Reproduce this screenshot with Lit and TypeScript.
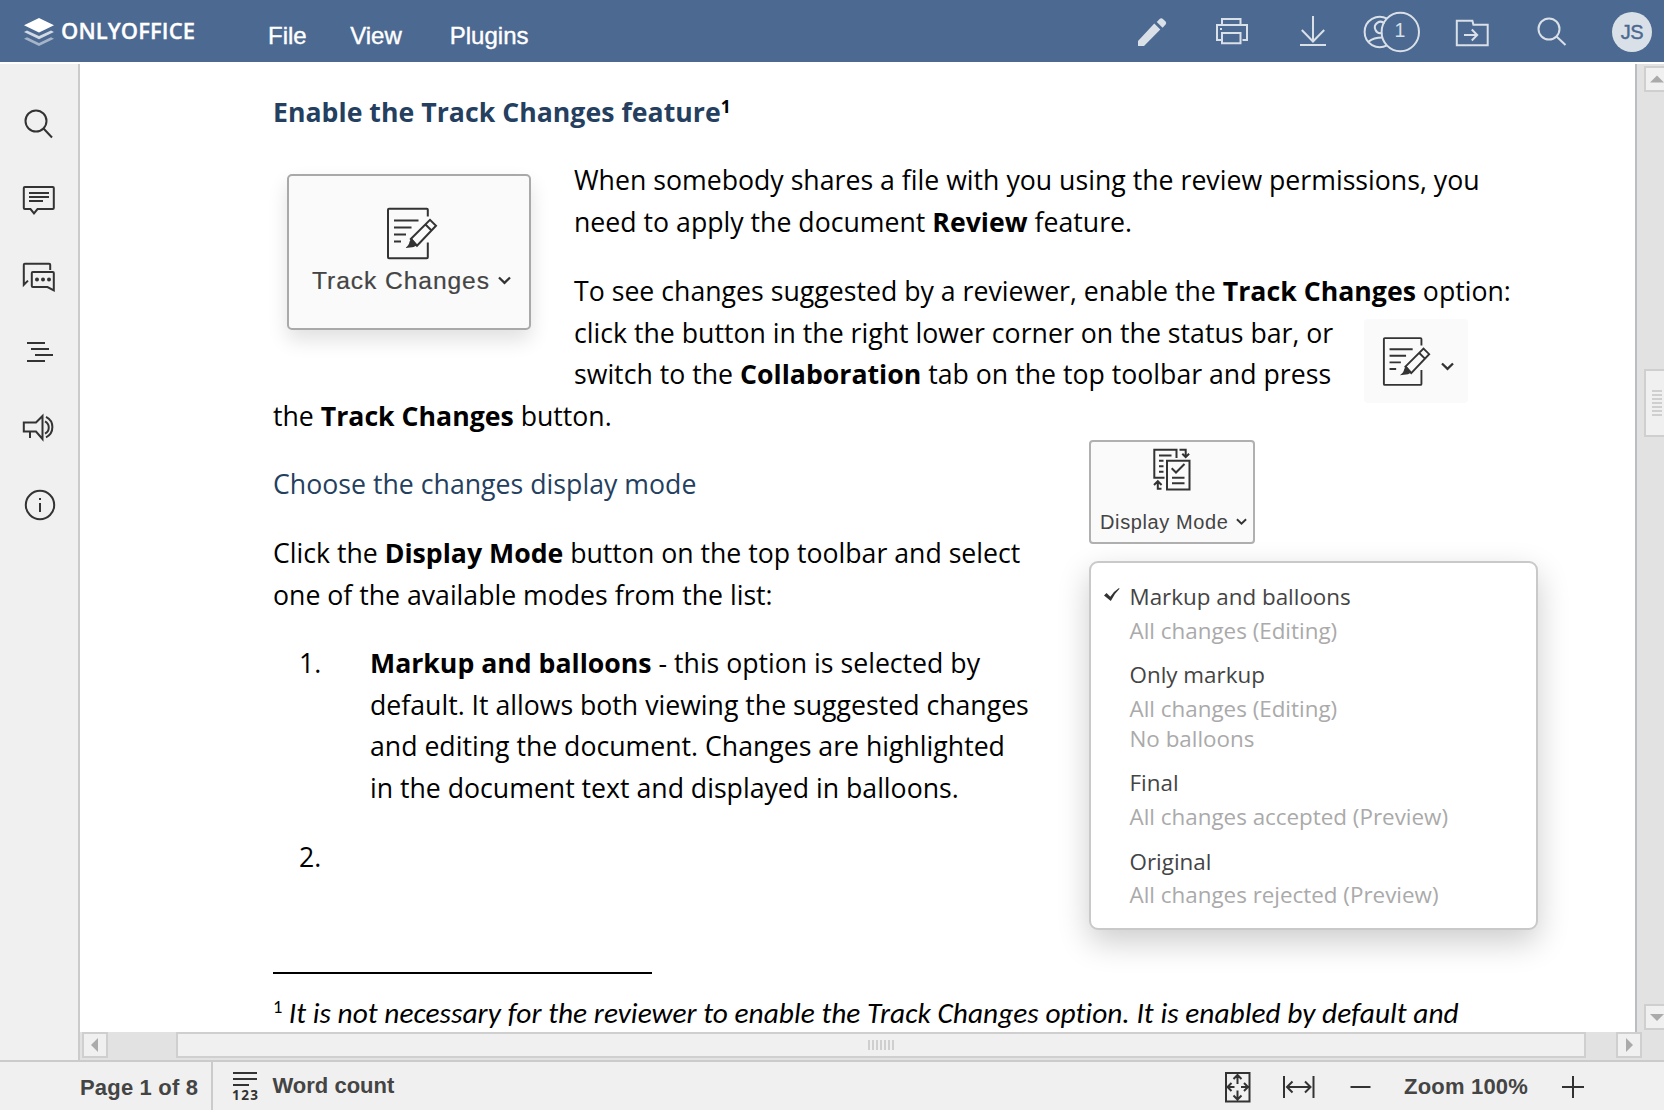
import { LitElement, html, svg, css } from 'lit';
import { customElement } from 'lit/decorators.js';

/* Toolbar glyphs: each occupies an 80x62 cell of the header. */
const headerIcons = [
  svg`<path class="solid" d="M26 46v-5l16.3-17.5 6 6L32 46zM44.8 22l2.8-3q1.6-1.6 3.3 0l2.7 2.6q1.3 1.6 0 3l-3 3.1z"/>`,
  svg`<path d="M110 24.5V19h18.5v5.5M109.500 40h-4.500V25h30v15h-4.500M110 33h18.500v10.200H110z"/><path class="solid" d="M108 28h2v2h-2z"/>`,
  svg`<path d="M201 16v25.500M189.800 30l11.200 11.500L212.200 30M188 45h26"/>`,
  svg`<path d="M275 18.600a15.200 15.200 0 1 0 0 26.800M256.500 41.700q5-4.200 14-4.200M272.500 23.500a5.600 5.600 0 1 0-2.300 9.300"/><ellipse cx="288.300" cy="32" rx="18.700" ry="19.200"/>`,
  svg`<path d="M344.800 45.200V20.800h15.600l1 4h14.300v20.400zM352 35h13M359.800 29.500l5.400 5.500-5.400 5.500"/>`,
  svg`<circle cx="437" cy="29" r="10.500"/><path d="M444.500 36.500l9 8.500"/>`,
];

/* Side panel glyphs, 40x40 each. */
const sideIcons = [
  svg`<circle cx="17" cy="17" r="10.500"/><path d="M24.500 24.500l8.500 9"/>`,
  svg`<path d="M5.800 7h28q1 0 1 1v20q0 1-1 1H18.500L15 33.300 11.500 29H5.800q-1 0-1-1V8q0-1 1-1zM10 13h20M10 17h20M10 21h14"/>`,
  svg`<path d="M31.200 14V8.800q0-1-1-1H5.800q-1 0-1 1v20L9 24.600M13.800 16h20q1 0 1 1v17.300L28.500 31H13.800q-1 0-1-1V17q0-1 1-1z"/><circle class="solid" cx="18" cy="23.500" r="2"/><circle class="solid" cx="24" cy="23.500" r="2"/><circle class="solid" cx="30" cy="23.500" r="2"/>`,
  svg`<path d="M8 11h18M12 17h18M16 23h18M8 29h18"/>`,
  svg`<path d="M4.800 14.500H17L23.500 8v23L17 23.500H4.800zM11 23.500V30M26 13.300a7 7 0 0 1 0 12.400M27 8.800a11.500 11.500 0 0 1 0 20.600"/>`,
  svg`<circle cx="21" cy="21" r="14.200"/><path d="M21 19v9"/><path class="solid" d="M20 14h2v2h-2z"/>`,
];

const reviewIcon = (cls: string) => html`<svg class=${cls} viewBox="0 0 53 54">
  <path d="M41.800 10.500V3.800q0-1-1-1H3q-1 0-1 1v47.500q0 1 1 1h37.800q1 0 1-1V36.500M8 14.500h24.500M8 21.500h17.500M8 28.500h12M8 35.500h7"/>
  <path d="M24.800 33L44 13.800l6 6-19 20zM39.500 18.500l6 6"/>
  <path class="solid" d="M19 42q4-2.500 4.600-6.500l2-3.500 6 7-4 2z"/></svg>`;

const chevron = (cls: string) => html`<svg class=${cls} viewBox="0 0 13 9"><path d="M1 1.500l5.500 5.300L12 1.500"/></svg>`;

interface Mode { title: string; notes: string[]; checked?: boolean; }
const modes: Mode[] = [
  { title: 'Markup and balloons', notes: ['All changes (Editing)'], checked: true },
  { title: 'Only markup', notes: ['All changes (Editing)', 'No balloons'] },
  { title: 'Final', notes: ['All changes accepted (Preview)'] },
  { title: 'Original', notes: ['All changes rejected (Preview)'] },
];

@customElement('app-root')
export class AppRoot extends LitElement {
  static styles = css`
    :host { display: flex; flex-direction: column; width: 1664px; height: 1110px; overflow: hidden; background: #fff; font-family: "Liberation Sans", Arial, sans-serif; }
    * { box-sizing: border-box; }
    svg { display: block; flex: none; fill: none; stroke: #333; stroke-width: 2; }
    svg .solid { fill: #333; stroke: none; }
    p { margin: 0; white-space: nowrap; }

    .header { display: flex; flex: none; height: 62px; background: #4c6991; color: #fff; }
    .brand { display: flex; width: 268px; padding-left: 24px; }
    .brand svg { width: 30px; height: 62px; stroke: none; fill: #fff; }
    .brand span { margin-left: 7px; font: 600 22px/61px "Open Sans", sans-serif; letter-spacing: .080px; -webkit-text-stroke: .3px #fff; }
    .menu { display: flex; font-size: 24px; line-height: 72px; -webkit-text-stroke: .4px #fff; }
    .menu span { margin-right: 43.500px; }
    .menu span + span { margin-right: 48px; }
    .tools { display: flex; margin-left: auto; padding-right: 12px; align-items: center; }
    .tools svg { width: 500px; height: 62px; stroke: #d9e0e8; }
    .tools svg .solid { fill: #d9e0e8; }
    .tools text { fill: #d9e0e8; stroke: none; font-size: 19.500px; }
    .avatar { width: 40px; height: 40px; margin-top: 2px; border-radius: 50%; background: #d9e0e8; color: #4c6991; font-size: 20px; line-height: 40px; letter-spacing: -.5px; text-align: center; -webkit-text-stroke: .4px #4c6991; }

    .main { display: flex; flex: 1; min-height: 0; margin-top: 2px; }
    .side { display: flex; flex-direction: column; flex: none; gap: 36px; width: 80px; padding: 40px 0 0 19px; background: #f0f0f0; border-right: 2px solid #cbcbcb; }
    .side svg { width: 40px; height: 40px; }
    .center { display: flex; flex: none; flex-direction: column; width: 1564px; background: #e2e2e2; }
    .page { width: 1557px; height: 968px; flex: none; overflow: hidden; padding: 27px 0 0 193px; background: #fff; border-right: 2px solid #b8bec2; color: #000; font: 26.670px/41.770px "Open Sans", sans-serif; }
    .heading { color: #243f60; font-weight: 700; letter-spacing: .020px; }
    .sup { display: inline-block; color: #000; font-size: 17.500px; line-height: 20px; transform: translateY(-9px); }
    .sub { color: #243f60; letter-spacing: .020px; }
    .gap { margin-top: 26.900px; }
    .share { display: flex; margin-top: 26.670px; letter-spacing: .010px; }
    .side-card { flex: none; width: 301px; padding: 14.500px 0 0 14px; }
    .track { display: flex; flex-direction: column; width: 244px; height: 156px; padding: 30px 0 0 23px; background: #fafafa; border: 2px solid #a9a9a9; border-radius: 5px; box-shadow: 0 10px 20px rgba(0,0,0,.12); }
    .review { width: 53px; height: 54px; margin-left: 74px; }
    .caption { display: flex; align-items: center; color: #444; white-space: nowrap; }
    .track .caption { margin-top: 5px; font: 24.600px/32px "Liberation Sans", Arial, sans-serif; letter-spacing: .930px; -webkit-text-stroke: .2px #444; }
    .chev { width: 13px; height: 9px; margin-left: 8.500px; stroke-width: 2.300; }
    .inline { display: flex; height: 83.340px; }
    .inline-icon { display: flex; align-items: center; width: 104px; height: 84px; margin: 7px 0 0 31px; padding-left: 18px; background: #fafafa; border-radius: 4px; }
    .review-small { width: 50px; height: 52px; margin-bottom: 0; }
    .inline-icon .chev { margin: 11px 0 0 9px; }

    .choose { display: flex; height: 493px; }
    .left { flex: none; width: 816px; padding-top: 26.400px; }
    .item { display: flex; margin-top: 26.670px; padding-left: 26px; }
    .num { flex: none; width: 71px; }
    .right { flex: none; padding-top: 3px; }
    .display { display: flex; flex-direction: column; width: 165.500px; height: 104px; padding: 6px 0 0 9px; background: #fafafa; border: 2px solid #b0b0b0; border-radius: 4px; }
    .display .mode-icon { width: 40px; height: 44px; margin-left: 51px; }
    .display .caption { margin-top: 18px; font: 20px/24px "Liberation Sans", Arial, sans-serif; letter-spacing: .620px; }
    .chev-small { width: 11px; height: 7.500px; margin-left: 7px; stroke-width: 2.300; }
    .list { display: flex; flex-direction: column; gap: 14.700px; width: 449px; height: 369px; margin-top: 17.500px; padding: 19.100px 0 0 12.500px; background: #fff; border: 2px solid #c9c9c9; border-radius: 9px; box-shadow: 0 12px 32px rgba(0,0,0,.2); font-size: 22.400px; line-height: 30px; color: #444; }
    .mode { display: flex; }
    .tick { flex: none; width: 26px; padding-top: 6px; }
    .tick svg { width: 16px; height: 14px; stroke: none; fill: #333; }
    .note { color: #aaa; }
    .title + .note { margin-top: 3.400px; }

    .rule { width: 379px; height: 2px; margin-top: 42px; background: #000; }
    .footnote { display: flex; margin-top: 18.500px; font-family: Carlito, Lato, sans-serif; }
    .mark { font-size: 18.500px; line-height: 28px; padding-top: 1px; width: 15.800px; }
    .footnote .body { padding-top: .8px; font-size: 29.330px; font-style: italic; font-variant-ligatures: none; letter-spacing: .035px; }

    .hbar { display: flex; height: 26px; margin-left: 2px; flex: none; }
    .btn { flex: none; width: 26px; height: 26px; background: #f0f0f0; border: 2px solid #cfcfcf; }
    .btn svg { width: 22px; height: 22px; stroke: none; fill: #aaa; }
    .thumb { display: flex; align-items: center; justify-content: center; background: #f0f0f0; border: 2px solid #cfcfcf; }
    .hbar .thumb { width: 1410px; margin: 0 30px 0 68px; }
    .hgrip { width: 26px; height: 10px; background: repeating-linear-gradient(90deg, #cfcfcf 0 2px, transparent 2px 4px); }
    .vcol { display: flex; flex: none; flex-direction: column; width: 20px; overflow: hidden; background: #e2e2e2; }
    .vbar { display: flex; flex: none; flex-direction: column; height: 966px; padding-top: 2px; }
    .vbar .thumb { flex: none; width: 26px; height: 68px; margin: 277px 0 auto; }
    .vgrip { width: 10px; height: 26px; background: repeating-linear-gradient(#cfcfcf 0 2px, transparent 2px 4px); }

    .status { display: flex; flex: none; height: 50px; background: #f0f0f0; border-top: 2px solid #cbcbcb; color: #444; font-size: 22px; font-weight: 700; line-height: 48px; white-space: nowrap; }
    .pages { width: 213px; padding: 2px 0 0 80px; border-right: 2px solid #cbcbcb; letter-spacing: .180px; }
    .count { width: 26px; height: 48px; margin: 0 14.500px 0 19px; }
    .count text { fill: #333; stroke: none; font: 700 13.500px "Open Sans", sans-serif; }
    .zoom { display: flex; margin-left: auto; padding-right: 79px; }
    .zoom .level { margin: 1px 33px 0 32.500px; letter-spacing: .180px; }
    .fit { width: 148px; height: 48px; }
    .plus { width: 24px; height: 48px; }
  `;

  render() {
    return html`
      <div class="header">
        <div class="brand">
          <svg viewBox="0 0 30 62"><path d="M0 25.200L15 18l15 7.200L15 32.500z"/><path opacity=".75" d="M0 32l3-1.600 12 5.600 12-5.600 3 1.600-15 7.200z"/><path opacity=".5" d="M0 38.800l3-1.600L15 43l12-5.800 3 1.600L15 46z"/></svg>
          <span>ONLYOFFICE</span>
        </div>
        <div class="menu"><span>File</span><span>View</span><span>Plugins</span></div>
        <div class="tools">
          <svg viewBox="0 0 500 62">${headerIcons}<text x="282.500" y="37">1</text></svg>
          <div class="avatar">JS</div>
        </div>
      </div>
      <div class="main">
        <div class="side">${sideIcons.map(i => html`<svg viewBox="0 0 40 40">${i}</svg>`)}</div>
        <div class="center">
          <div class="page">
            <p class="heading">Enable the Track Changes feature<span class="sup">1</span></p>
            <div class="share">
              <div class="side-card">
                <div class="track">${reviewIcon('review')}<div class="caption">Track Changes${chevron('chev')}</div></div>
              </div>
              <div>
                <p>When somebody shares a file with you using the review permissions, you</p>
                <p>need to apply the document <b>Review</b> feature.</p>
                <p class="gap">To see changes suggested by a reviewer, enable the <b>Track Changes</b> option:</p>
                <div class="inline">
                  <div>
                    <p>click the button in the right lower corner on the status bar, or</p>
                    <p>switch to the <b>Collaboration</b> tab on the top toolbar and press</p>
                  </div>
                  <div class="inline-icon">${reviewIcon('review-small')}${chevron('chev')}</div>
                </div>
              </div>
            </div>
            <p>the <b>Track Changes</b> button.</p>
            <div class="choose">
              <div class="left">
                <p class="sub">Choose the changes display mode</p>
                <p class="gap">Click the <b>Display Mode</b> button on the top toolbar and select</p>
                <p>one of the available modes from the list:</p>
                <div class="item"><span class="num">1.</span><div>
                  <p><b>Markup and balloons</b> - this option is selected by</p>
                  <p>default. It allows both viewing the suggested changes</p>
                  <p>and editing the document. Changes are highlighted</p>
                  <p>in the document text and displayed in balloons.</p></div></div>
                <div class="item"><span class="num">2.</span></div>
              </div>
              <div class="right">
                <div class="display">
                  <svg class="mode-icon" viewBox="1151 448 40 44">
                    <path d="M1176.500 458v-8.200h-22.200v28h10.200M1159 455.500h12.500M1159 460.700h4.500M1159 466.300h4.500M1159 471.700h4.500M1167 460.700h22.500v28.800H1167zM1171.700 468.300l4.300 4.200 8.500-8.500M1172 477.700h12.500M1172 483.300h12.500M1179.500 449.800h6.200v7.200M1182.300 453.800l3.400 3.400 3.400-3.400M1161.500 488.800h-3.700v-7M1154 485l3.800-3.800 3.800 3.800"/>
                  </svg>
                  <div class="caption">Display Mode${chevron('chev-small')}</div>
                </div>
                <div class="list">${modes.map(m => html`
                  <div class="mode">
                    <div class="tick">${m.checked ? html`<svg viewBox="0 0 16 14"><path d="M0 7.500L2.500 5l3.800 3.700Q9.500 3.500 15 0l.5.800Q10.500 5.500 6.800 13z"/></svg>` : ''}</div>
                    <div><p class="title">${m.title}</p>${m.notes.map(n => html`<p class="note">${n}</p>`)}</div>
                  </div>`)}
                </div>
              </div>
            </div>
            <div class="rule"></div>
            <div class="footnote"><span class="mark">1</span><p class="body">It is not necessary for the reviewer to enable the Track Changes option. It is enabled by default and</p></div>
          </div>
          <div class="hbar">
            <div class="btn"><svg viewBox="0 0 22 22"><path d="M14 4v14l-7-7z"/></svg></div>
            <div class="thumb"><div class="hgrip"></div></div>
            <div class="btn"><svg viewBox="0 0 22 22"><path d="M8 4v14l7-7z"/></svg></div>
          </div>
        </div>
        <div class="vcol">
          <div class="vbar">
            <div class="btn"><svg viewBox="0 0 22 22"><path d="M4 14.500h14l-7-7z"/></svg></div>
            <div class="thumb"><div class="vgrip"></div></div>
            <div class="btn"><svg viewBox="0 0 22 22"><path d="M4 8h14l-7 7z"/></svg></div>
          </div>
        </div>
      </div>
      <div class="status">
        <div class="pages">Page 1 of 8</div>
        <svg class="count" viewBox="0 0 26 48"><path d="M1 11h24M1 17h24M1 23h16"/><text x="0" y="37.500" textLength="26">123</text></svg>
        <span>Word count</span>
        <div class="zoom">
          <svg class="fit" viewBox="1223.500 1062 148 48">
            <path d="M1225.500 1073h23.500v28.500h-23.500zM1237 1075.500v8.500M1233 1079l4-4 4 4M1237 1099v-8.500M1233 1095.500l4 4 4-4M1227 1087h7M1231 1083l-4 4 4 4M1247.500 1087h-7M1243.500 1083l4 4-4 4M1283.500 1076v22M1313 1076v22M1287 1087h23M1292 1081.500l-5.500 5.500 5.500 5.500M1304.500 1081.500l5.500 5.500-5.500 5.500M1350 1087h20"/>
          </svg>
          <span class="level">Zoom 100%</span>
          <svg class="plus" viewBox="0 0 24 48"><path d="M1 25h22M12 14v22"/></svg>
        </div>
      </div>`;
  }
}
